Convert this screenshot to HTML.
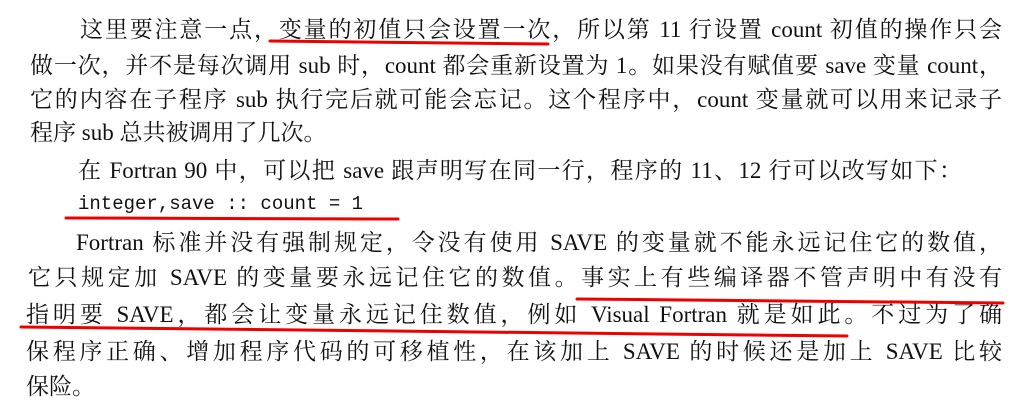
<!DOCTYPE html>
<html><head><meta charset="utf-8"><style>
html,body{margin:0;padding:0;background:#fff;width:1024px;height:403px;overflow:hidden;position:relative}
.l{position:absolute;font-family:"Liberation Serif","Noto Serif CJK SC",serif;font-size:23px;line-height:26px;color:#111;white-space:nowrap;text-align:justify;text-align-last:justify}
.m{font-family:"Liberation Mono",monospace;font-size:19px;text-align-last:left}
svg{position:absolute;left:0;top:0}
</style></head><body>
<div class="l" style="left:80px;top:17px;width:922px">这里要注意一点，变量的初值只会设置一次，所以第 11 行设置 count 初值的操作只会</div>
<div class="l" style="left:30px;top:53px;width:972px">做一次，并不是每次调用 sub 时，count 都会重新设置为 1。如果没有赋值要 save 变量 count，</div>
<div class="l" style="left:30px;top:87px;width:972px">它的内容在子程序 sub 执行完后就可能会忘记。这个程序中，count 变量就可以用来记录子</div>
<div class="l" style="left:30px;top:120px;text-align-last:left">程序 sub 总共被调用了几次。</div>
<div class="l" style="left:78px;top:158px;width:884px">在 Fortran 90 中，可以把 save 跟声明写在同一行，程序的 11、12 行可以改写如下：</div>
<div class="l m" style="left:78px;top:191px">integer,save :: count = 1</div>
<div class="l" style="left:76px;top:230px;width:926px">Fortran 标准并没有强制规定，令没有使用 SAVE 的变量就不能永远记住它的数值，</div>
<div class="l" style="left:28px;top:265px;width:974px">它只规定加 SAVE 的变量要永远记住它的数值。事实上有些编译器不管声明中有没有</div>
<div class="l" style="left:26px;top:302px;width:976px">指明要 SAVE，都会让变量永远记住数值，例如 Visual Fortran 就是如此。不过为了确</div>
<div class="l" style="left:26px;top:339px;width:976px">保程序正确、增加程序代码的可移植性，在该加上 SAVE 的时候还是加上 SAVE 比较</div>
<div class="l" style="left:26px;top:374px;text-align-last:left">保险。</div>
<svg width="1024" height="403">
<g stroke="#e00" stroke-width="3" fill="none" stroke-linecap="round">
<line x1="270" y1="41" x2="548" y2="44"/>
<line x1="66" y1="218" x2="398" y2="219"/>
<line x1="577" y1="299" x2="1003" y2="303"/>
<line x1="21" y1="327" x2="847" y2="336"/>
</g></svg>
</body></html>
